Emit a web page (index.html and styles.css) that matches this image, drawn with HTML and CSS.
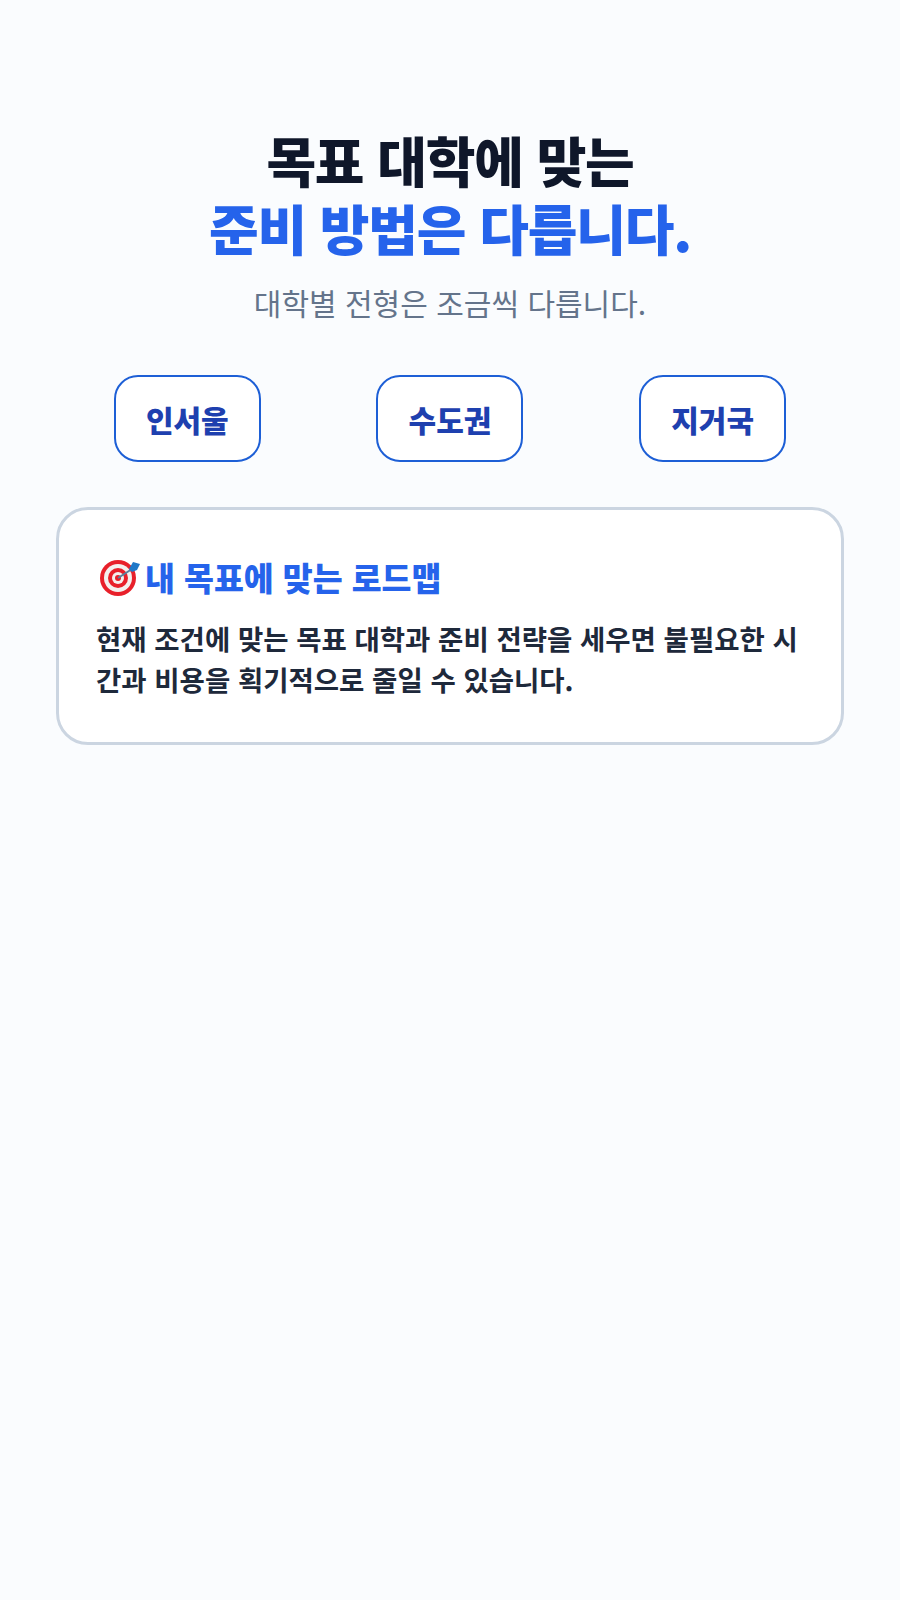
FILE: index.html
```html
<!DOCTYPE html>
<html lang="ko">
<head>
	<meta charset="UTF-8">
	<title>목표 대학</title>
	<link rel="stylesheet" href="styles.css">
</head>
<body>
	<div class="page">
		<h1 class="title">
			<span class="title-line">목표 대학에 맞는</span>
			<span class="title-line accent">준비 방법은 다릅니다.</span>
		</h1>
		<p class="sub">대학별 전형은 조금씩 다릅니다.</p>
		<div class="chips">
			<div class="chip">인서울</div>
			<div class="chip">수도권</div>
			<div class="chip">지거국</div>
		</div>
		<div class="card">
			<h2 class="card-title">
				<svg class="target" viewBox="0 0 42 40" width="42" height="40">
					<circle cx="19" cy="21" r="18" fill="#e8202a"/>
					<circle cx="19" cy="21" r="14" fill="#f4f0ee"/>
					<circle cx="19" cy="21" r="10" fill="#e8202a"/>
					<circle cx="19" cy="21" r="6" fill="#f4f0ee"/>
					<circle cx="19" cy="21" r="3" fill="#e8202a"/>
					<path d="M19 21 L33 12" stroke="#5a7f9c" stroke-width="2"/>
					<path d="M30 12 L34 5 L41 7 L38 13 L33 15 Z" fill="#1f78c8"/>
				</svg>
				<span>내 목표에 맞는 로드맵</span>
			</h2>
			<p class="card-text">현재 조건에 맞는 목표 대학과 준비 전략을 세우면 불필요한 시간과 비용을 획기적으로 줄일 수 있습니다.</p>
		</div>
	</div>
</body>
</html>
```

FILE: styles.css
```css
html,body{margin:0;padding:0;}
body{background:#fafcfe;font-family:"Noto Sans CJK KR","Noto Sans",sans-serif;}
.page{min-height:1600px;box-sizing:border-box;padding:126px 56px 0;}
.title{margin:0;text-align:center;font-size:54px;line-height:68px;font-weight:800;color:#0f172a;letter-spacing:-1.2px;}
.title-line{display:block;}
.accent{color:#2563eb;}
.sub{margin:18px 0 0;text-align:center;font-size:30px;line-height:44px;color:#64748b;font-weight:400;}
.chips{display:flex;justify-content:space-around;margin-top:51px;}
.chip{box-sizing:border-box;width:147px;height:87px;border:2.5px solid #1d5fd6;border-radius:24px;background:#fff;display:flex;align-items:center;justify-content:center;font-size:30px;font-weight:800;color:#1e40af;}
.card{margin-top:45px;background:#fff;border:3px solid #cbd5e1;border-radius:32px;padding:41px 37px 41px;}
.card-title{margin:0;display:flex;align-items:center;gap:4px;font-size:32.5px;line-height:52px;font-weight:800;color:#2563eb;}
.target{margin-left:3px;}
.card-text{margin:15px 0 0;font-size:27.5px;line-height:1.5;font-weight:600;color:#1e293b;}
```
